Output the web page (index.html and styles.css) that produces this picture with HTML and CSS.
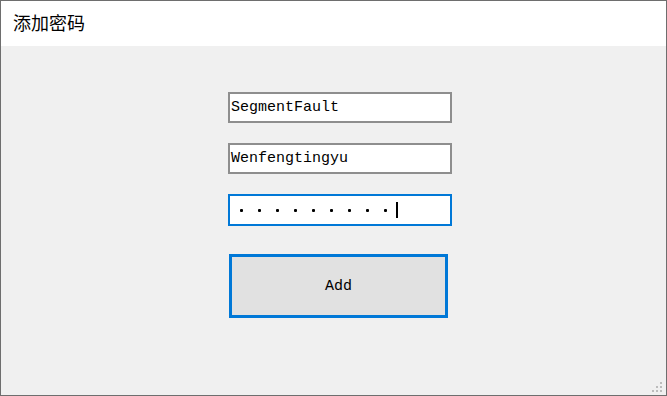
FILE: index.html
```html
<!DOCTYPE html>
<html>

<head>
    <meta charset="UTF-8">
    <title>添加密码</title>
    <link rel="stylesheet" href="styles.css">
</head>

<body>
    <div class="window">
        <div class="titlebar">添加密码</div>

        <div class="content">
            <div class="form">
                <div class="field">SegmentFault</div>
                <div class="field">Wenfengtingyu</div>
                <div class="field focused">
                    <span class="dot"></span><span class="dot"></span><span class="dot"></span>
                    <span class="dot"></span><span class="dot"></span><span class="dot"></span>
                    <span class="dot"></span><span class="dot"></span><span class="dot"></span>
                    <span class="caret"></span>
                </div>
                <button class="add-button">Add</button>
            </div>

            <svg class="grip" width="12" height="12" viewBox="0 0 12 12">
                <rect x="9" y="1" width="2" height="2" fill="#bcbcbc" />
                <rect x="5" y="5" width="2" height="2" fill="#bcbcbc" />
                <rect x="9" y="5" width="2" height="2" fill="#bcbcbc" />
                <rect x="1" y="9" width="2" height="2" fill="#bcbcbc" />
                <rect x="5" y="9" width="2" height="2" fill="#bcbcbc" />
                <rect x="9" y="9" width="2" height="2" fill="#bcbcbc" />
            </svg>
        </div>
    </div>
</body>

</html>
```

FILE: styles.css
```css
html,
body {
    margin: 0;
    padding: 0;
}

body {
    width: 667px;
    height: 396px;
    overflow: hidden;
}

.window {
    box-sizing: border-box;
    width: 667px;
    height: 396px;
    border: 1px solid #6e6e6e;
    display: flex;
    flex-direction: column;
    background-color: #f0f0f0;
}

.titlebar {
    height: 45px;
    flex: none;
    background-color: #fff;
    padding-left: 12px;
    font-family: "Noto Sans CJK SC", sans-serif;
    font-size: 18px;
    line-height: 42px;
    color: #000;
}

.content {
    position: relative;
    flex: 1;
}

.form {
    margin-left: 227px;
    padding-top: 46px;
    display: flex;
    flex-direction: column;
    align-items: flex-start;
}

.field {
    box-sizing: border-box;
    width: 224px;
    height: 31px;
    margin-bottom: 20px;
    border: 2px solid #8e8e8e;
    background-color: #fff;
    padding-left: 1px;
    font-family: "Liberation Mono", "Courier New", monospace;
    font-size: 15px;
    line-height: 26px;
    color: #000;
    display: flex;
    align-items: center;
}

.field.focused {
    height: 32px;
    margin-bottom: 28px;
    border-color: #0078d7;
    padding-left: 10px;
}

.dot {
    width: 3px;
    height: 3px;
    margin-right: 15px;
    background-color: #000;
    border-radius: 1px;
}

.caret {
    width: 2px;
    height: 16px;
    margin-left: -6px;
    background-color: #000;
}

.add-button {
    box-sizing: border-box;
    width: 219px;
    height: 64px;
    margin-left: 1px;
    border: 3px solid #0078d7;
    background-color: #e1e1e1;
    font-family: "Liberation Mono", "Courier New", monospace;
    font-size: 15px;
    font-weight: normal;
    color: #000;
    padding: 0;
}

.grip {
    position: absolute;
    right: 3px;
    bottom: 2px;
}
```
